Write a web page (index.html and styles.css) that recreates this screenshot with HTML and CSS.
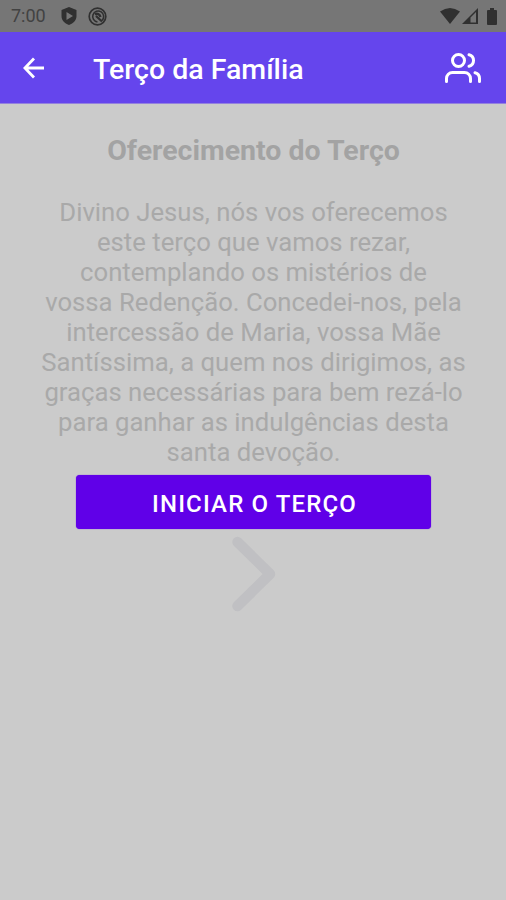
FILE: index.html
```html
<!DOCTYPE html>
<html lang="pt-BR">
<head>
<meta charset="utf-8">
<title>Terço da Família</title>
<link rel="stylesheet" href="styles.css">
</head>
<body>
<div class="status">
  <span class="time">7:00</span>
  <svg class="shield" width="16" height="18" viewBox="0 0 16 18"><path fill-rule="evenodd" d="M8 0L15.5 3v6c0 4-3 7.500-7.500 9C3.500 16.500.5 13 .5 9V3zM5.500 5v8l6.500-4z"/></svg>
  <svg class="ring" width="19" height="19" viewBox="0 0 19 19"><g fill="none" stroke="#303030"><circle cx="9.500" cy="9.500" r="8.300" stroke-width="1.700"/><path d="M14 13.500A5.500 5.500 0 1 0 9.500 15" stroke-width="1.600"/><path d="M7 7.500C9 6 12 7 12.500 10M8 9l6 5.500" stroke-width="2.300"/></g></svg>
  <svg class="wifi" width="20" height="16" viewBox="0 0 20 16"><path d="M0 3.600Q10-3.400 20 3.600L10 16z"/></svg>
  <svg class="signal" width="16" height="16" viewBox="0 0 16 16"><path fill-rule="evenodd" d="M0 16L16 0v16zM8.500 9.500v5H14V4z"/></svg>
  <svg class="battery" width="10" height="17" viewBox="0 0 10 17"><path d="M3 0h4v2h2q1 0 1 1v13q0 1-1 1H1q-1 0-1-1V3q0-1 1-1h2z"/></svg>
</div>
<header class="bar">
  <svg class="back" width="22" height="22" viewBox="0 0 22 22"><path d="M21 11H2.500M11 1.500L1.900 11l9.100 9.500"/></svg>
  <h1>Terço da Família</h1>
  <svg class="users" width="36" height="36" viewBox="0 0 24 24"><path d="M17 21v-2a4 4 0 0 0-4-4H5a4 4 0 0 0-4 4v2"/><circle cx="9" cy="7" r="4"/><path d="M23 21v-2a4 4 0 0 0-3-3.870M16 3.130a4 4 0 0 1 0 7.750"/></svg>
</header>
<main>
  <h2>Oferecimento do Terço</h2>
  <p>Divino Jesus, nós vos oferecemos<br>este terço que vamos rezar,<br>contemplando os mistérios de<br>vossa Redenção. Concedei-nos, pela<br>intercessão de Maria, vossa Mãe<br>Santíssima, a quem nos dirigimos, as<br>graças necessárias para bem rezá-lo<br>para ganhar as indulgências desta<br>santa devoção.</p>
  <button>INICIAR O TERÇO</button>
  <svg class="next" width="46" height="78" viewBox="0 0 46 78"><path d="M6.500 7l32.500 32L6.500 71"/></svg>
</main>
</body>
</html>
```

FILE: styles.css
```css
* { box-sizing: border-box; }
body {
  margin: 0;
  height: 900px;
  overflow: hidden;
  background: #cbcbcb;
  font-family: Roboto, sans-serif;
}
.status {
  height: 32px;
  display: flex;
  align-items: center;
  padding: 0 9px 0 11px;
  background: #767676;
  color: #424242;
}
.status svg { fill: #303030; flex: none; }
.time { width: 50px; font-size: 18px; line-height: 32px; }
.ring { margin-left: 11px; }
.wifi { margin-left: auto; }
.signal { margin-left: 2px; }
.battery { margin-left: 9px; }
.bar {
  height: 72px;
  display: flex;
  align-items: center;
  padding: 0 25px 0 23px;
  background: #6545ed;
  border-bottom: 1px solid #9482dd;
  color: #fff;
}
.bar svg { fill: none; stroke: #fff; }
.back { stroke-width: 2.8; }
.bar h1 {
  margin: 5px 0 0 48px;
  font-size: 28.5px;
  line-height: 36px;
  font-weight: 500;
  white-space: nowrap;
}
.bar .users {
  margin-left: auto;
  stroke-width: 2;
  stroke-linecap: round;
  stroke-linejoin: round;
}
main {
  display: flex;
  flex-direction: column;
  align-items: center;
  padding-top: 29px;
  color: #a9a9a9;
}
h2 {
  margin: 0 0 0 1px;
  font-size: 28.5px;
  line-height: 36px;
  font-weight: 700;
  color: #a3a3a3;
  white-space: nowrap;
}
p {
  margin: 28px 0 0 1px;
  font-size: 25.7px;
  line-height: 30px;
  text-align: center;
  white-space: nowrap;
}
button {
  width: 355px;
  height: 54px;
  margin: 8px 0 0 1px;
  padding: 3px 0 0 2px;
  border: 0;
  border-radius: 4px;
  background: #6000e8;
  box-shadow: 0 0 1px #6000e8;
  color: #fff;
  font: 500 24px/28px Roboto, sans-serif;
  letter-spacing: 1.15px;
}
.next {
  margin: 6px 0 0 2px;
  fill: none;
  stroke: #c0c0c3;
  stroke-width: 10.5;
  stroke-linecap: round;
  stroke-linejoin: round;
}
```
